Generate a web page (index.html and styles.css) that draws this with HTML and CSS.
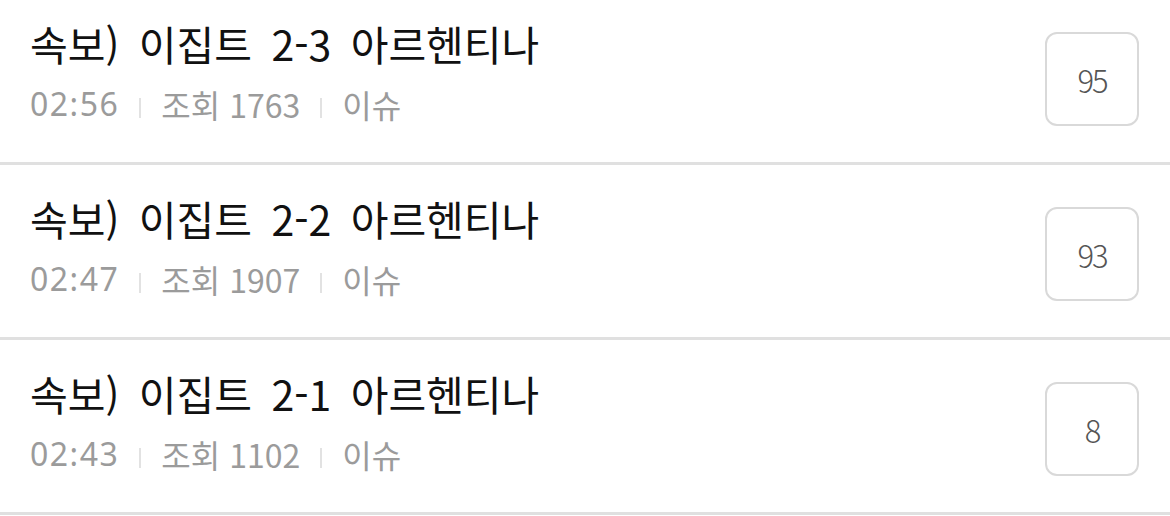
FILE: index.html
```html
<!DOCTYPE html>
<html lang="ko">
<head>
    <meta charset="UTF-8">
    <meta name="viewport" content="width=device-width, initial-scale=1.0">
    <link rel="stylesheet" href="styles.css">
    <title>속보 목록</title>
</head>
<body>
    <ul class="post-list">
        <li class="post">
            <div class="post-body">
                <p class="post-title">속보) 이집트 2-3 아르헨티나</p>
                <p class="post-meta">
                    <span class="time">02:56</span><span class="sep"></span><span>조회 1763</span><span class="sep"></span><span>이슈</span>
                </p>
            </div>
            <div class="comment-count">95</div>
        </li>
        <li class="post">
            <div class="post-body">
                <p class="post-title">속보) 이집트 2-2 아르헨티나</p>
                <p class="post-meta">
                    <span class="time">02:47</span><span class="sep"></span><span>조회 1907</span><span class="sep"></span><span>이슈</span>
                </p>
            </div>
            <div class="comment-count">93</div>
        </li>
        <li class="post">
            <div class="post-body">
                <p class="post-title">속보) 이집트 2-1 아르헨티나</p>
                <p class="post-meta">
                    <span class="time">02:43</span><span class="sep"></span><span>조회 1102</span><span class="sep"></span><span>이슈</span>
                </p>
            </div>
            <div class="comment-count">8</div>
        </li>
    </ul>
</body>
</html>
```
FILE: styles.css
```css
body {
    margin: 0;
    background: #fff;
    font-family: "Noto Sans CJK KR", "Noto Sans", sans-serif;
    overflow: hidden;
}

.post-list {
    list-style: none;
    margin: -10px 0 0;
    padding: 0;
}

.post {
    display: flex;
    align-items: center;
    justify-content: space-between;
    height: 172px;
    padding: 0 31px 0 30px;
    border-bottom: 3px solid #e0e0e0;
    box-sizing: content-box;
}

.post-body {
    display: flex;
    flex-direction: column;
    gap: 15px;
    padding-bottom: 11px;
}

.post-title {
    margin: 0;
    font-size: 41px;
    line-height: 52px;
    word-spacing: 8px;
    color: #111;
}

.post-meta {
    display: flex;
    align-items: center;
    margin: 0;
    font-size: 32px;
    line-height: 40px;
    color: #9b9b9b;
}

/* the CJK colon sits too high, use the latin face for the clock */
.time {
    font-family: "Noto Sans", sans-serif;
    letter-spacing: 1.5px;
}

.sep {
    width: 2px;
    height: 20px;
    margin: 8px 20px 0;
    background: #e2e2e2;
}

.comment-count {
    display: flex;
    align-items: center;
    justify-content: center;
    width: 90px;
    height: 90px;
    margin-top: 6px;
    border: 2px solid #d9d9d9;
    border-radius: 12px;
    font-size: 31px;
    font-weight: 300;
    letter-spacing: -2px;
    color: #555;
}
```
